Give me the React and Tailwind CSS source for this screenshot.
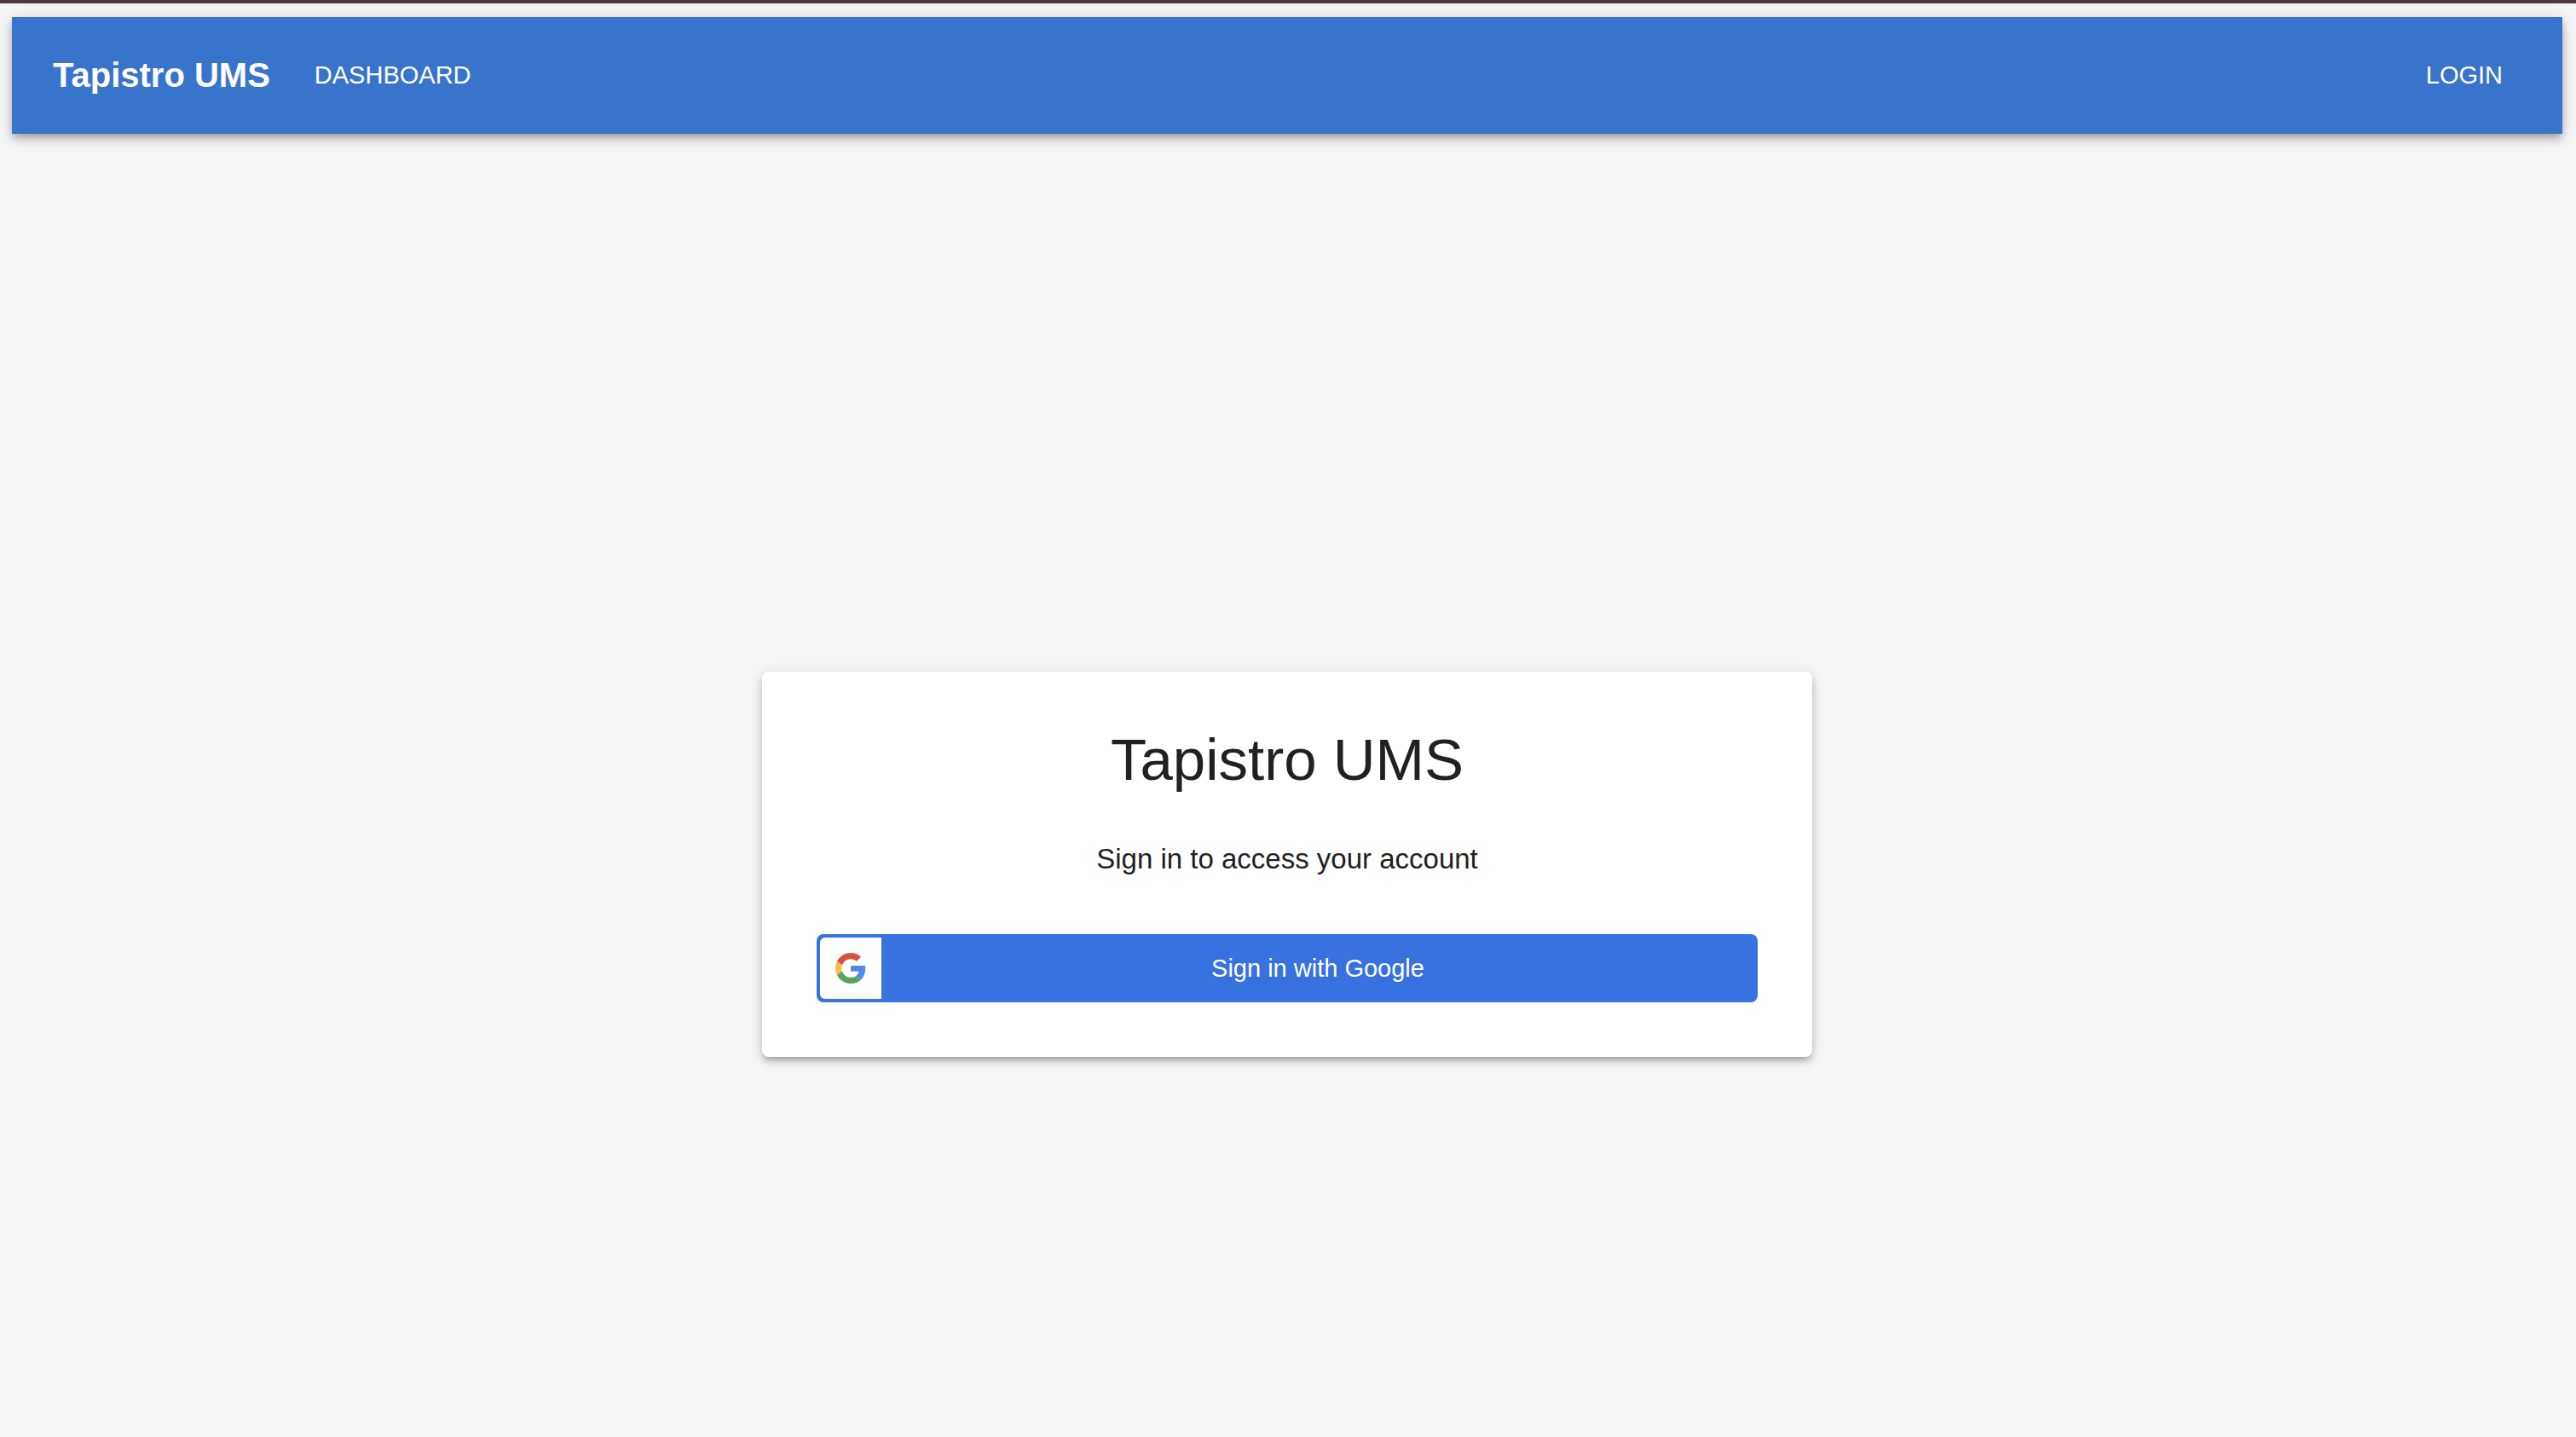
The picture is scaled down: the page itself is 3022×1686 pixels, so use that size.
function GoogleLogo() {
  return (
    <svg viewBox="0 0 48 48" className="size-9" aria-hidden="true">
      <path fill="#db5140" d="M24 9.5c3.54 0 6.71 1.22 9.21 3.6l6.85-6.85C35.9 2.38 30.47 0 24 0 14.62 0 6.51 5.38 2.56 13.22l7.98 6.19C12.43 13.72 17.74 9.5 24 9.5z" />
      <path fill="#5586ee" d="M46.98 24.55c0-1.57-.15-3.09-.38-4.55H24v9.02h12.94c-.58 2.96-2.26 5.48-4.78 7.18l7.73 6c4.51-4.18 7.09-10.36 7.09-17.65z" />
      <path fill="#f3be42" d="M10.53 28.59c-.48-1.45-.76-2.99-.76-4.59s.27-3.14.76-4.59l-7.98-6.19C.92 16.46 0 20.12 0 24c0 3.88.92 7.54 2.56 10.78l7.97-6.19z" />
      <path fill="#58a55c" d="M24 48c6.48 0 11.93-2.13 15.89-5.81l-7.73-6c-2.15 1.45-4.92 2.3-8.16 2.3-6.26 0-11.57-4.22-13.47-9.91l-7.98 6.19C6.51 42.62 14.62 48 24 48z" />
    </svg>
  );
}

function Header() {
  return (
    <header className="flex items-center bg-[#3874cb] px-12 py-9 text-white shadow-[0_4px_8px_-2px_rgba(0,0,0,0.2),0_8px_10px_0_rgba(0,0,0,0.14),0_2px_20px_0_rgba(0,0,0,0.12)]">
      <a href="#home" className="text-[40px] leading-[65px] font-bold">Tapistro UMS</a>
      <nav className="ml-9 flex flex-1 items-center justify-between text-[29px] leading-[47px]">
        <a href="#dashboard" className="px-4">DASHBOARD</a>
        <a href="#login" className="px-5.5">LOGIN</a>
      </nav>
    </header>
  );
}

function SignInCard() {
  return (
    <section className="w-full max-w-[1232px] rounded-lg bg-white p-16 text-center text-[#212121] shadow-[0_6px_6px_-4px_rgba(0,0,0,0.2),0_6px_8px_0_rgba(0,0,0,0.14),0_2px_16px_0_rgba(0,0,0,0.12)]">
      <h1 className="text-[69px] leading-[80px]">Tapistro UMS</h1>
      <p className="mt-13 text-[33px] leading-[48px]">Sign in to access your account</p>
      <button type="button" className="mt-16 flex w-full items-center rounded-lg bg-[#3871e0] p-1 text-white">
        <span className="flex size-[72px] items-center justify-center rounded-l-md bg-white">
          <GoogleLogo />
        </span>
        <span className="flex-1 text-[29px] leading-[32px]">Sign in with Google</span>
      </button>
    </section>
  );
}

export default function App() {
  return (
    <div className="flex min-h-screen flex-col border-t-4 border-[#4c373e] bg-[#f5f5f5] pt-4 pr-4 pl-3.5 font-['Liberation_Sans',Arial,sans-serif]">
      <Header />
      <main className="flex flex-1 items-center justify-center pt-46">
        <SignInCard />
      </main>
    </div>
  );
}
